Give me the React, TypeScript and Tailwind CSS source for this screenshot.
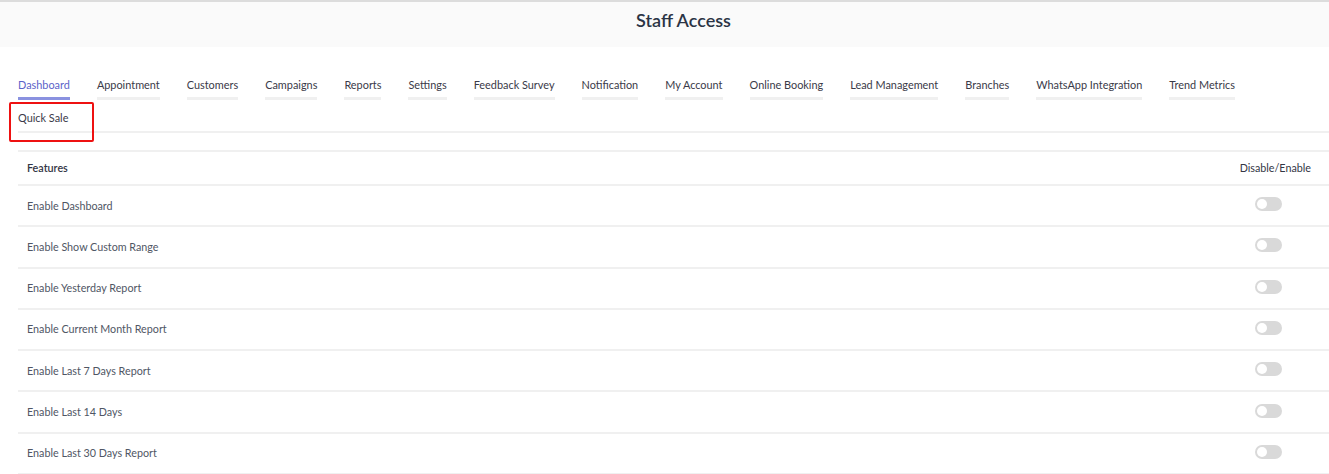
const tabs = [
  "Dashboard",
  "Appointment",
  "Customers",
  "Campaigns",
  "Reports",
  "Settings",
  "Feedback Survey",
  "Notification",
  "My Account",
  "Online Booking",
  "Lead Management",
  "Branches",
  "WhatsApp Integration",
  "Trend Metrics",
];

const features = [
  "Enable Dashboard",
  "Enable Show Custom Range",
  "Enable Yesterday Report",
  "Enable Current Month Report",
  "Enable Last 7 Days Report",
  "Enable Last 14 Days",
  "Enable Last 30 Days Report",
];

function Toggle() {
  return (
    <span className="-mt-[3px] inline-flex h-[14px] w-[27px] items-center rounded-full bg-[#d9d9d9] px-[2px]">
      <span className="h-[10px] w-[10px] rounded-full bg-white" />
    </span>
  );
}

export default function App() {
  return (
    <div
      className="min-h-screen bg-white text-[11px]"
      style={{ fontFamily: 'Lato, "Noto Sans", sans-serif' }}
    >
      <div className="border-t-[2px] border-[#dcdcdc] bg-[#fafafa] h-[47px] flex items-center justify-center pl-[38px]">
        <h1 className="text-[18px] font-semibold text-[#2b3445] -mt-[8px]">Staff Access</h1>
      </div>

      <div className="pl-[18px] pt-[30px]">
        <div className="flex gap-x-[27px] text-[10.9px] leading-[16px]">
          {tabs.map((t, i) => (
            <div
              key={t}
              className={`pb-[4px] border-b-[3px] ${
                i === 0 ? "border-[#8a92e0] text-[#5b63c9]" : "border-[#f0f0f0] text-[#3a3a48]"
              }`}
            >
              {t}
            </div>
          ))}
        </div>
        <div className="border-b-[2px] border-[#f0f0f0] pt-[10px] pb-[5px] text-[10.9px] leading-[16px]">
          <div className="relative inline-block text-[#3a3a48]">
            Quick Sale
            <div className="absolute -left-[9px] -top-[8px] h-[40px] w-[85px] rounded-[2px] border-[2.5px] border-[#ee1111]" />
          </div>
        </div>

        <div className="mt-[17px] border-t-[2px] border-[#f0f0f0] text-[10.75px]">
          <div className="flex h-[34px] items-center justify-between border-b-[2px] border-[#f0f0f0] pl-[9px] pr-[18px] font-semibold text-[#333644]">
            <span>Features</span>
            <span className="font-normal">Disable/Enable</span>
          </div>
          {features.map((f) => (
            <div
              key={f}
              className="flex h-[41.3px] items-center justify-between border-b-[2px] border-[#f0f0f0] pl-[9px] pr-[47px] text-[#4f5664]"
            >
              <span>{f}</span>
              <Toggle />
            </div>
          ))}
        </div>
      </div>
    </div>
  );
}
